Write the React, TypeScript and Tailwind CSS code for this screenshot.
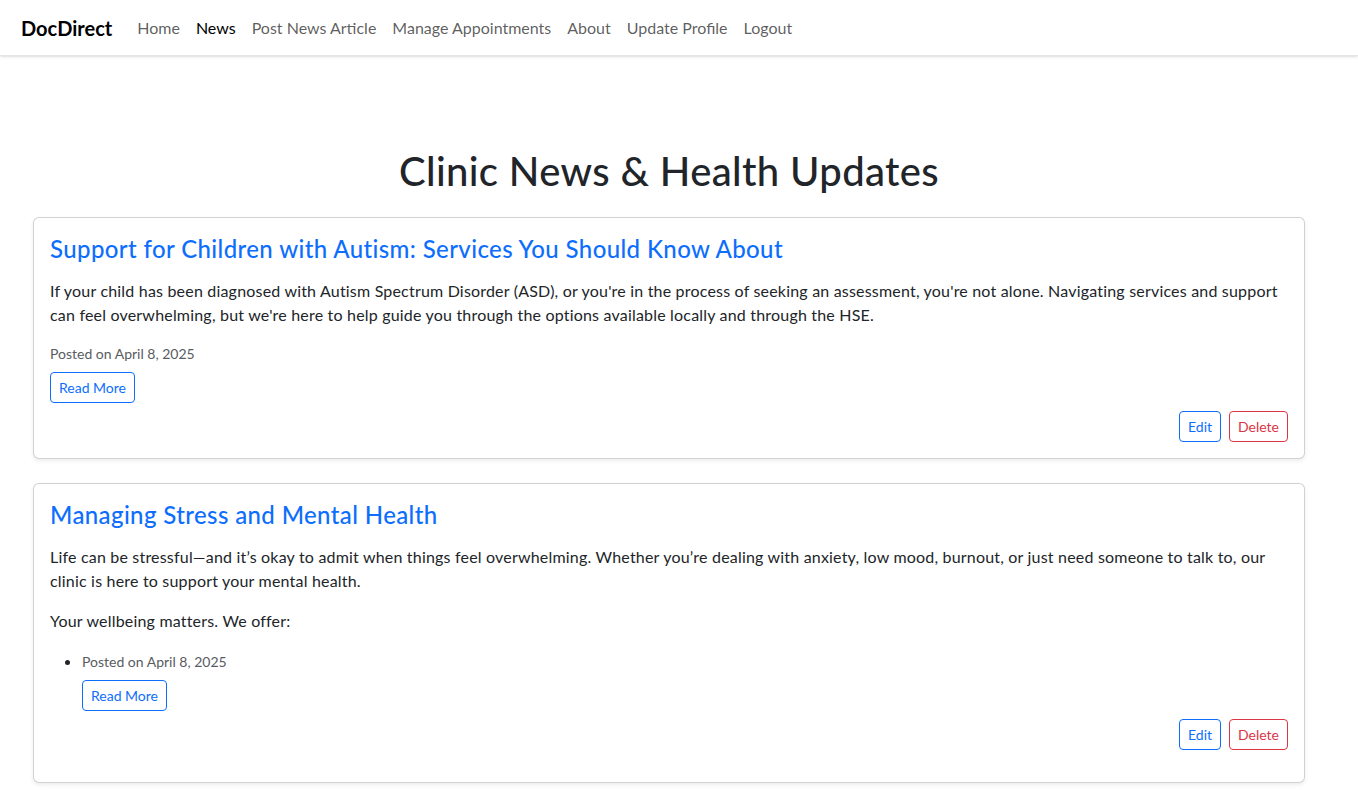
import React from "react";

const font = { fontFamily: "'Segoe UI', Lato, 'Noto Sans', sans-serif" };

const links = ["Home", "News", "Post News Article", "Manage Appointments", "About", "Update Profile", "Logout"];

const EditRow = () => (
  <div className="mt-2 flex justify-end gap-2">
    <button className="rounded-[4px] border border-[#0d6efd] px-2 py-1 text-sm leading-[21px] text-[#0d6efd]">
      Edit
    </button>
    <button className="rounded-[4px] border border-[#dc3545] px-2 py-1 text-sm leading-[21px] text-[#dc3545]">
      Delete
    </button>
  </div>
);

const ReadMore = () => (
  <button className="rounded-[4px] border border-[#0d6efd] px-2 py-1 text-sm leading-[21px] text-[#0d6efd]">
    Read More
  </button>
);

export default function App() {
  return (
    <div className="min-h-screen bg-white text-[#212529]" style={font}>
      {/* navbar */}
      <nav className="flex h-14 items-center border-b border-black/10 px-[21px] shadow-sm">
        <span className="mr-[17px] text-xl font-bold leading-[30px] text-black">DocDirect</span>
        <div className="flex">
          {links.map((l) => (
            <a
              key={l}
              href="#"
              className={
                "px-2 text-base leading-6 " + (l === "News" ? "text-black" : "text-black/65")
              }
            >
              {l}
            </a>
          ))}
        </div>
      </nav>

      <div className="ml-[21px] w-[1296px] px-3 pt-[91px]">
        <h1 className="mb-[22px] text-center text-[40px] font-medium leading-[48px] tracking-[0.009em]">
          Clinic News &amp; Health Updates
        </h1>

        {/* card 1 */}
        <div className="mb-6 rounded-md border border-black/[.175] bg-white p-4 shadow-[0_2px_4px_rgba(0,0,0,0.075)]">
          <h4 className="mb-4 text-2xl font-medium leading-[29px] tracking-[0.016em] text-[#0d6efd]">
            Support for Children with Autism: Services You Should Know About
          </h4>
          <p className="mb-4 text-base leading-6 tracking-[0.012em]">
            If your child has been diagnosed with Autism Spectrum Disorder (ASD), or you're in the process of seeking an
            assessment, you're not alone. Navigating services and support can feel overwhelming, but we're here to help
            guide you through the options available locally and through the HSE.
          </p>
          <p className="mb-2 text-sm leading-[21px] text-[#595c5f]">Posted on April 8, 2025</p>
          <ReadMore />
          <EditRow />
        </div>

        {/* card 2 */}
        <div className="rounded-md border border-black/[.175] bg-white p-4 shadow-[0_2px_4px_rgba(0,0,0,0.075)]">
          <h4 className="mb-4 text-2xl font-medium leading-[29px] tracking-[0.016em] text-[#0d6efd]">
            Managing Stress and Mental Health
          </h4>
          <p className="mb-4 text-base leading-6 tracking-[0.012em]">
            Life can be stressful—and it’s okay to admit when things feel overwhelming. Whether you’re dealing with
            anxiety, low mood, burnout, or just need someone to talk to, our clinic is here to support your mental health.
          </p>
          <p className="mb-4 text-base leading-6 tracking-[0.012em]">Your wellbeing matters. We offer:</p>
          <ul className="mb-4 list-disc pl-8">
            <li>
              <p className="mb-2 text-sm leading-[21px] text-[#595c5f]">Posted on April 8, 2025</p>
              <ReadMore />
              <EditRow />
            </li>
          </ul>
        </div>
      </div>
    </div>
  );
}
